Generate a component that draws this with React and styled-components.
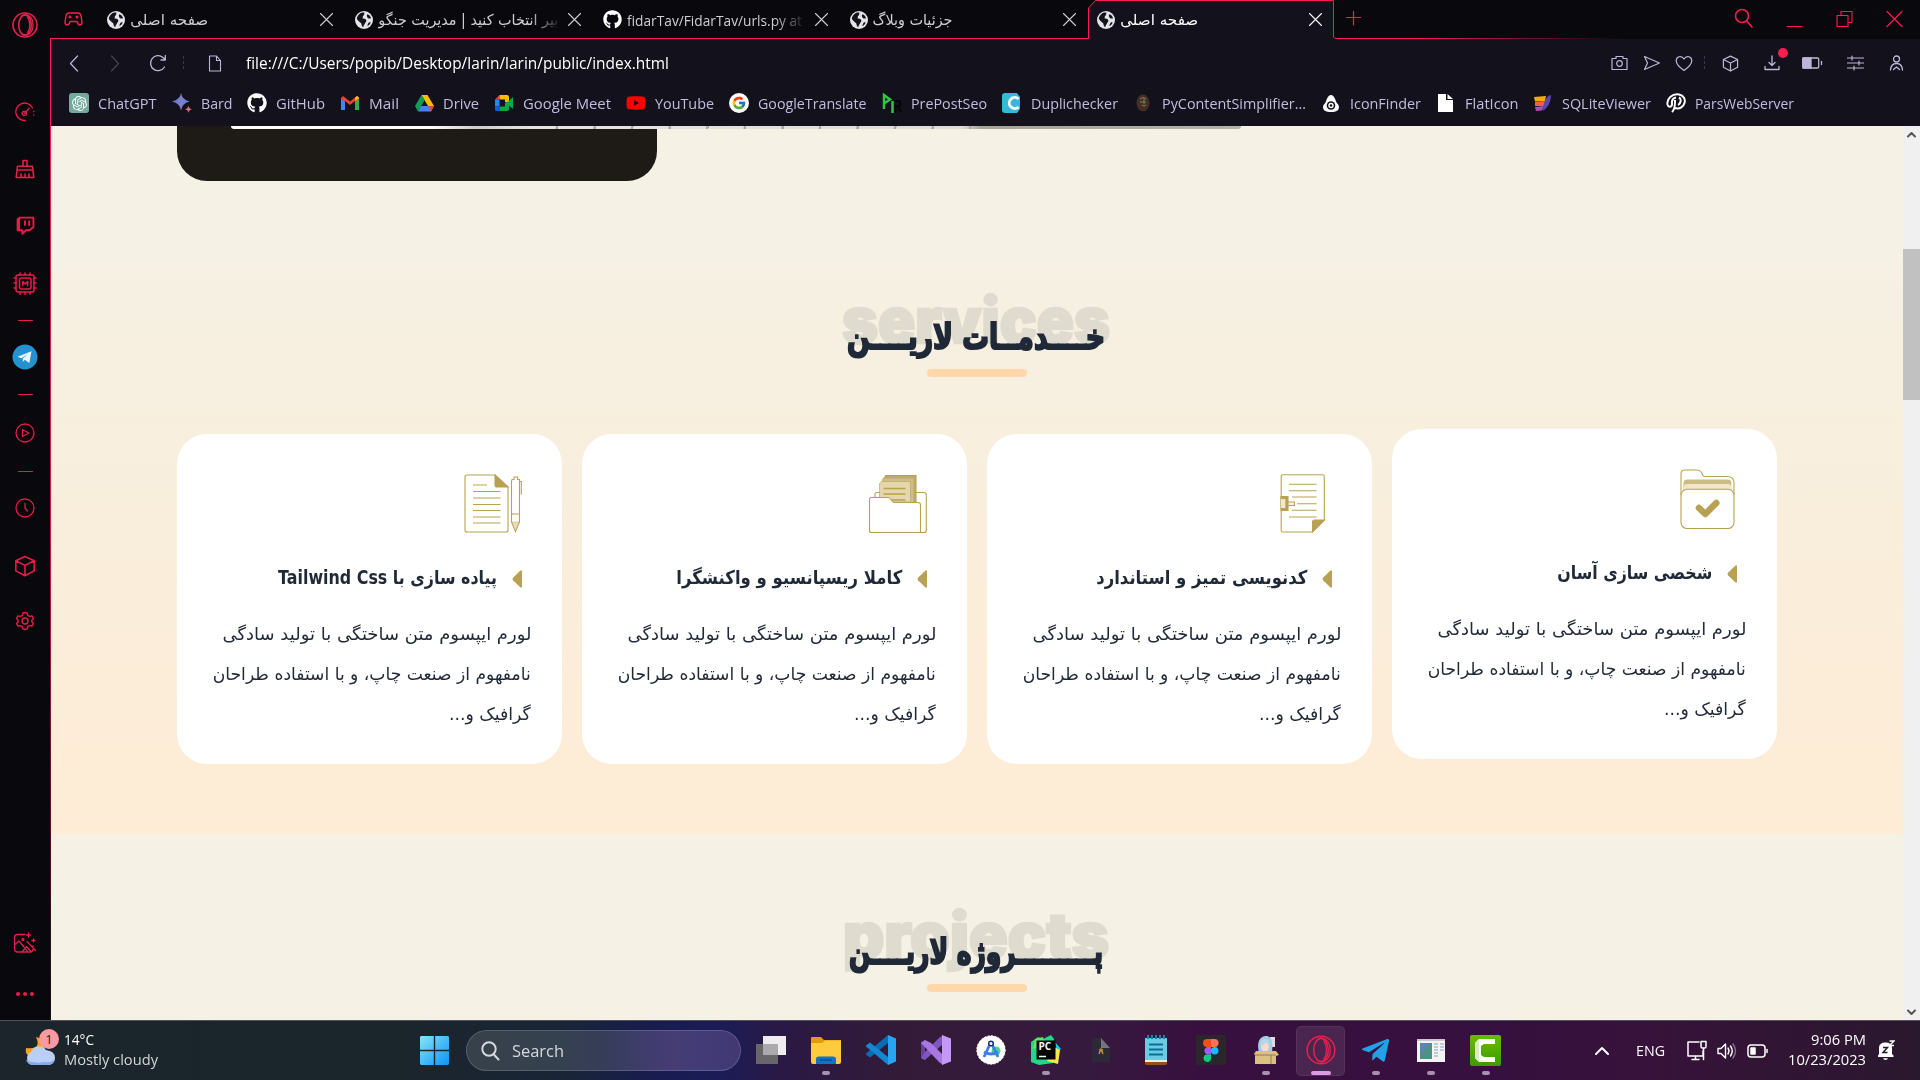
import React, { useLayoutEffect, useRef } from "react";
import styled, { createGlobalStyle } from "styled-components";
import { FaGithub, FaTelegramPlane, FaYoutube } from "react-icons/fa";
import { FcGoogle } from "react-icons/fc";
import { SiOpenai } from "react-icons/si";

const RED = "#fa1e4e";
const GOLD = "#b9a154";
const LATIN = '"Open Sans", "Noto Sans", sans-serif';
const PERSIAN = '"DejaVu Sans", "Noto Sans", sans-serif';

const Global = createGlobalStyle`
  * { box-sizing: border-box; }
  html, body { margin: 0; padding: 0; overflow: hidden; background: #09080d; }
  svg { display: block; flex: none; }
`;

/* ---------- fitted text ---------- */
const FitBox = styled.span`
  display: block;
  flex: none;
  width: ${(p) => p.$w}px;
  direction: ${(p) => (p.$rtl ? "rtl" : "ltr")};
  white-space: nowrap;
`;
const FitInner = styled.span`
  display: inline-block;
  transform-origin: ${(p) => (p.$rtl ? "right" : "left")} center;
`;
function Fit({ w, rtl, children }) {
  const ref = useRef(null);
  useLayoutEffect(() => {
    const el = ref.current;
    el.style.transform = "none";
    const natural = el.getBoundingClientRect().width;
    if (natural) el.style.transform = `scaleX(${w / natural})`;
  }, [w, children]);
  return (
    <FitBox $w={w} $rtl={rtl}>
      <FitInner ref={ref} $rtl={rtl}>{children}</FitInner>
    </FitBox>
  );
}

/* ---------- shell ---------- */
const Screen = styled.div`
  width: 1920px;
  height: 1080px;
  display: grid;
  grid-template-rows: 1020px 60px;
  font-family: ${LATIN};
`;
const Browser = styled.div`
  display: grid;
  grid-template-columns: 50px 1870px;
  background: #09080d;
`;
const Side = styled.aside`
  display: flex;
  flex-direction: column;
  align-items: center;
  padding-top: 1px;
  color: #e61c4a;
  background: #09080d;
`;
const SideItem = styled.div`
  height: 24px;
  width: 50px;
  margin-top: ${(p) => p.$gap}px;
  display: flex;
  align-items: center;
  justify-content: center;
`;
const Dash = styled.div`
  width: 15px;
  height: 1px;
  background: #e61c4a;
`;
const Column = styled.div`
  display: grid;
  grid-template-rows: 39px 87px 894px;
`;

/* ---------- tabs ---------- */
const TabBar = styled.div`
  display: flex;
  color: #cfced4;
  font: 400 15px ${LATIN};
`;
const TabUnderline = styled.div`
  display: flex;
  border-bottom: 1px solid ${RED};
  height: 39px;
`;
const TabLead = styled.div`
  width: 47px;
  padding: 11px 0 0 14px;
`;
const Tab = styled.div`
  position: relative;
  width: ${(p) => p.$w}px;
  height: 39px;
  padding: 0 12px 0 10px;
  display: flex;
  align-items: center;
  gap: 5px;
  font-family: ${(p) => (p.$fa ? PERSIAN : LATIN)};
  font-size: ${(p) => (p.$fa ? 15 : 15)}px;
  color: ${(p) => (p.$active ? "#fff" : "#cfced4")};
  & > svg:last-child { margin-left: auto; }
`;
const TabLabel = styled.div`
  ${(p) => p.$fade && "mask-image: linear-gradient(to right, #000 84%, rgba(0,0,0,.15) 100%);"}
`;
const ActiveOutline = styled.svg`
  position: absolute;
  left: 0;
  top: 0;
`;
const TabFront = styled.div`
  position: relative;
  display: flex;
  align-items: center;
  gap: 5px;
  margin-left: -1px;
`;
const TabClose = styled.div`
  position: relative;
  margin-left: auto;
`;
const TabRest = styled.div`
  flex: 1;
  display: flex;
  height: 39px;
  padding: 11px 17px 0 12px;
  color: ${RED};
  background: linear-gradient(to right, ${RED} 0 80px, rgba(250, 30, 78, 0) 290px) bottom / 100% 1px no-repeat;
`;
const WindowButtons = styled.div`
  margin-left: auto;
  display: flex;
  gap: 33px;
  margin-top: -3px;
`;

/* ---------- toolbar ---------- */
const Tools = styled.div`
  background: #13111b;
  border-left: 1px solid ${RED};
`;
const AddressRow = styled.div`
  height: 48px;
  display: flex;
  align-items: center;
  padding: 0 16px 0 18px;
  color: #bdb6d8;
`;
const Slot = styled.div`
  width: ${(p) => p.$w}px;
  display: flex;
  align-items: center;
  opacity: ${(p) => p.$o || 1};
`;
const Dots = styled.i`
  width: 1px;
  height: 14px;
  background: repeating-linear-gradient(#3b3752 0 3px, transparent 3px 5px);
`;
const Address = styled.div`
  font-size: 15.5px;
  color: #fff;
  margin-left: -1px;
`;
const ToolRight = styled.div`
  margin-left: auto;
  display: flex;
  align-items: center;
`;
const DownloadWrap = styled.div`
  position: relative;
`;
const RedDot = styled.i`
  position: absolute;
  right: -8px;
  top: -7px;
  width: 10px;
  height: 10px;
  border-radius: 50%;
  background: ${RED};
`;
const Bookmarks = styled.div`
  height: 32px;
  display: flex;
  align-items: center;
  padding-left: 18px;
  gap: 15px;
  color: #c3bcdf;
  font-size: 15px;
`;
const Bookmark = styled.div`
  display: flex;
  align-items: center;
  gap: 9px;
`;
const MarkIcon = styled.div`
  width: 20px;
  height: 20px;
  display: flex;
  align-items: center;
  justify-content: center;
  color: #fff;
`;
const GptTile = styled.div`
  width: 20px;
  height: 20px;
  border-radius: 3px;
  display: grid;
  place-items: center;
  background: #75a99c;
  color: #fff;
`;

/* ---------- page ---------- */
const Viewport = styled.div`
  display: grid;
  grid-template-columns: 1852px 17px;
  border-left: 1px solid;
  border-image: linear-gradient(#fa1e4e, #c01a42 50%, #400d24 85%, #1a0a16) 1;
  overflow: hidden;
`;
const Page = styled.main`
  height: 894px;
  overflow: hidden;
  background: #f5f1e4;
`;
const Hero = styled.section`
  position: relative;
  height: 120px;
  padding-left: 126px;
`;
const HeroPanel = styled.div`
  width: 480px;
  height: 55px;
  border-radius: 0 0 30px 30px;
  background: #1e1a16;
`;
const HeroPhoto = styled.div`
  position: absolute;
  left: 180px;
  top: 0;
  width: 1010px;
  height: 3px;
  border-radius: 0 0 6px 6px;
  background:
    repeating-linear-gradient(100deg, transparent 0 34px, #a9a8a6 35px 37px) 290px 0 / 450px 3px no-repeat,
    linear-gradient(to right, #fffdf8 0 200px, #cfcdc9 245px, #e6e4e0 300px, #e0ddd8 730px, #a8a29a 750px, #b9b1a5 100%);
`;
const Services = styled.section`
  height: 588px;
  padding: 33px 126px 0;
  background: linear-gradient(#f5f1e4, #f7efdf 25%, #feecd5);
`;
const Projects = styled.section`
  padding: 60px 126px 0;
`;
const Heading = styled.header`
  display: grid;
  grid-template-rows: 90px 8px;
  justify-items: center;
  margin-right: 2px;
`;
const Ghost = styled.div`
  grid-area: 1 / 1;
  margin-top: 1px;
  height: 80px;
  font: 900 63px/80px Inter, sans-serif;
  color: #dfdbce;
  -webkit-text-stroke: 2.5px #dfdbce;
`;
const Title = styled.h2`
  grid-area: 1 / 1;
  margin: 28px 0 0;
  height: 60px;
  font: 700 35px/60px ${PERSIAN};
  color: #1f2937;
  -webkit-text-stroke: 2.2px #1f2937;
`;
const Rule = styled.div`
  grid-area: 2 / 1;
  width: 100px;
  height: 8px;
  margin-left: 2px;
  border-radius: 4px;
  background: #fed7aa;
`;
const Cards = styled.div`
  display: flex;
  gap: 20px;
  margin-top: 57px;
`;
const Card = styled.article`
  width: 385px;
  height: 330px;
  padding: 40px 31px 0;
  border-radius: 30px;
  background: #fff;
  direction: rtl;
  color: #1f2937;
  margin-top: ${(p) => (p.$lifted ? -5 : 0)}px;
  & > svg { margin-right: 8px; }
`;
const CardTitle = styled.h3`
  height: 40px;
  margin: 23px 9px 17px 0;
  display: flex;
  align-items: center;
  gap: 15px;
  font: 700 19px/40px ${PERSIAN};
  & > svg { margin-top: 4px; }
`;
const CardText = styled.p`
  margin: 0;
  font: 400 17.5px/40px ${PERSIAN};
`;
const Scrollbar = styled.div`
  display: flex;
  flex-direction: column;
  align-items: center;
  background: #f0f0f0;
  padding: 5px 0 4px;
  color: #555;
`;
const Thumb = styled.div`
  width: 17px;
  height: 151px;
  margin: 111px 0 auto;
  background: #c1c1c1;
`;

/* ---------- taskbar ---------- */
const Taskbar = styled.footer`
  display: flex;
  align-items: center;
  border-top: 1px solid #54525f;
  padding: 0 25px 0 24px;
  color: #fff;
  background: linear-gradient(to right, #1b252b 0, #1a252c 400px, #192536 560px, #181c50 660px, #1b1c57 720px, #2a1945 780px, #331b38 900px, #361a3e 1080px, #38103f 1200px, #36103e 1500px, #37123a 1650px, #2a182e 1920px);
`;
const Weather = styled.div`
  position: relative;
  width: 396px;
  display: flex;
  gap: 8px;
  align-items: center;
`;
const WeatherBadge = styled.div`
  position: absolute;
  left: 15px;
  top: -3px;
  width: 20px;
  height: 20px;
  border-radius: 50%;
  background: #fb99a2;
  color: #2c1a20;
  font-size: 13px;
  line-height: 20px;
  text-align: center;
`;
const TwoLines = styled.div`
  font-size: 14.5px;
  line-height: 20px;
  margin-top: -2px;
  color: #d3d6d8;
  display: flex;
  flex-direction: column;
  align-items: ${(p) => (p.$end ? "flex-end" : "flex-start")};
  ${(p) => p.$end && "color: #fff;"}
  & > span:first-child { color: #fff; }
`;
const Search = styled.div`
  width: 275px;
  height: 41px;
  margin: 0 2px 0 17px;
  padding-left: 14px;
  display: flex;
  align-items: center;
  gap: 12px;
  border-radius: 21px;
  border: 1px solid rgba(255, 255, 255, 0.16);
  background: linear-gradient(to right, rgba(255, 255, 255, 0.13) 50%, rgba(150, 120, 180, 0.36) 74%, rgba(140, 120, 180, 0.32));
  color: #d5d8dc;
  font-size: 16px;
`;
const Apps = styled.div`
  display: flex;
  align-items: center;
`;
const AppButton = styled.div`
  width: 49px;
  height: 50px;
  margin: 0 3px;
  padding-top: 4px;
  border-radius: 5px;
  display: grid;
  grid-template-rows: 41px 4px;
  place-items: center;
  background: ${(p) => (p.$active ? "rgba(255,255,255,.09)" : "none")};
  box-shadow: ${(p) => (p.$active ? "inset 0 0 0 1px rgba(255,255,255,.07)" : "none")};
`;
const RunMark = styled.i`
  width: ${(p) => (p.$active ? 20 : 8)}px;
  height: 4px;
  border-radius: 2px;
  background: ${(p) => (p.$active ? "#dc9be4" : "#a78fae")};
`;
const Tray = styled.div`
  margin-left: auto;
  display: flex;
  align-items: center;
  font-size: 14.5px;
`;
const Bell = styled.div`
  margin-left: 11px;
`;

/* ---------- small drawings ---------- */
const Line = ({ w = 18, h = w, vb, sw = 1.3, children, fill = "none", ...r }) => (
  <svg width={w} height={h} viewBox={vb || `0 0 ${w} ${h}`} fill={fill} stroke="currentColor" strokeWidth={sw} strokeLinecap="round" strokeLinejoin="round" {...r}>{children}</svg>
);
const Cross = ({ s = 13, sw = 1.1 }) => <Line w={s} sw={sw}><path d={`M.5 .5 ${s - 0.5} ${s - 0.5}M${s - 0.5} .5 .5 ${s - 0.5}`} /></Line>;
const Globe = () => (
  <svg width="18" height="18" viewBox="0 0 18 18">
    <circle cx="9" cy="9" r="9" fill="#e4e5ea" />
    <path d="M4.500 3C6 1.600 8 1.400 9.500 1.800 8.800 3 9.800 3.800 8.300 4.700 7.200 5.400 8.600 6.300 7.200 7.300 8.800 7.600 10.300 7.600 11 8.700 12 10 10.800 10.800 10.200 12 9.600 13.500 8.500 14.200 8.200 16.300 6.700 15.500 6.600 13.500 6.200 12.200 4.500 10.800 2.600 9.500 1.800 7.500 2.200 5.500 3.200 4 4.500 3ZM12.300 3.200C14 3.500 15.500 5.200 16 7.200 14.500 7.700 12.700 7.300 12.200 5.900 11.800 5 11.700 4 12.300 3.200ZM14 11.300C15 11 15.500 11.300 15.600 11.800 14.900 13.500 13.800 14.600 12.500 15.200 12.300 13.900 13 12.400 14 11.300Z" fill="#14131b" />
  </svg>
);
const Opera = ({ w = 26, h = 26, sw = 1.6 }) => (
  <svg width={w} height={h} viewBox="0 0 26 26" fill="none" stroke="#e8204c" strokeWidth={sw}>
    <circle cx="13" cy="13" r="12" /><ellipse cx="13" cy="13" rx="6.300" ry="10" />
    <path d="M9.500 4C14 .5 21 4 21 13S14 25.500 9.500 22M15 5C18.500 8 18.500 18 15 21" strokeWidth={sw * 0.8} />
  </svg>
);
const Cube = ({ w = 18 }) => <Line w={w} vb="0 0 18 18"><path d="M9 1.200 16.500 4.700V13L9 17 1.500 13V4.700ZM1.500 4.700 9 8.500 16.500 4.700M9 8.500V17" /></Line>;

const sideItems = [
  [12, <Opera key="o" />],
  [63, <Line key="a" w={20} vb="0 0 19 19"><path d="M10 17.500A8.300 8.300 0 1 1 16.500 5.500M17.800 9V9.200M17.800 12.300V12.500M9 11 13.500 6" /><circle cx="8.800" cy="11" r="2" /></Line>],
  [33, <Line key="b" w={20} h={20} sw={1.600}><path d="M8 7V1.500H12V7M2.500 7.300H17.500L18.800 18.500H1.200ZM2 11H18M6 15V18M10 15V18M14 15V18" /></Line>],
  [32, <Line key="c" w={19} vb="0 0 18 18" sw={1.800}><path d="M3.500 1.500H16.500V10.500L13 13.500H9.500L6 17V13.500H1.500V3.500ZM8.500 5V8.500M12.500 5V8.500" /><path d="M2.600 3V13" strokeWidth="2.500" /></Line>],
  [34, <Line key="d" w={24} h={23} sw={1.500}><rect x="3" y="3" width="18" height="17" rx="2" /><rect x="6.500" y="6" width="11.500" height="11" rx="2" /><path d="M9.800 13.500V9.500L12.200 12 14.600 9.500V13.500M7 1V3M12 1V3M17 1V3M7 20V22.300M12 20V22.300M17 20V22.300M1 6H3M1 11H3M1 16H3M21 6H23M21 11H23M21 16H23" /></Line>],
  [13, <Dash key="e" />],
  [13, <svg key="f" width="26" height="26" viewBox="0 0 26 26"><circle cx="13" cy="13" r="12.500" fill="#2492cf" /><path d="M5.500 12.800 19.500 7.300 17.300 19 12.800 15.800 10.800 18V14.600L16 10 9.500 14.200Z" fill="#eef5fa" /></svg>],
  [13, <Dash key="g" />],
  [15, <Line key="h" w={20}><circle cx="10" cy="10" r="9" /><path d="M7.500 6.500V13.500L14 10Z" /></Line>],
  [14, <Dash key="i" />],
  [13, <Line key="j" w={20}><circle cx="10" cy="10" r="9" /><path d="M10 5.500V10L12.500 13" /></Line>],
  [34, <Cube key="k" w={22} />],
  [31, <Line key="l" w={20} vb="0 0 24 24" sw={1.700}><path d="M12 1.800 14.500 2.400 15.300 5.200 17.600 6.500 20.400 5.800 22.200 9 20.200 11V13L22.200 15 20.400 18.200 17.600 17.500 15.300 18.800 14.500 21.600 12 22.200 9.500 21.600 8.700 18.800 6.400 17.500 3.600 18.200 1.800 15 3.800 13V11L1.800 9 3.600 5.800 6.400 6.500 8.700 5.200 9.500 2.400Z" /><circle cx="12" cy="12" r="3.600" /></Line>],
  [298, <Line key="m" w={24} h={22} sw={1.300}><path d="M12 2.500H4A3 3 0 0 0 1.500 5.500V17A3 3 0 0 0 4.500 20H17A3 3 0 0 0 20 17V14M1.500 13 6 9 15 20M9 20 13.500 14.500 18 19.500M14 9.500 22.500 18.500M15.500 1V5M13.500 3H17.500M20.500 7V10M19 8.500H22" /><circle cx="10" cy="7.500" r="1" /></Line>],
  [27, <svg key="n" width="20" height="6" fill="#e61c4a"><circle cx="3" cy="3" r="2" /><circle cx="10" cy="3" r="2" /><circle cx="17" cy="3" r="2" /></svg>],
];

const bookmarks = [
  ["ChatGPT", 58.5, <GptTile key="a"><SiOpenai size={15} /></GptTile>],
  ["Bard", 31.5, <svg key="b" width="20" height="20"><defs><linearGradient id="bard" x1="0" x2="1"><stop stopColor="#3f7fe8" /><stop offset=".5" stopColor="#8b7bc8" /><stop offset="1" stopColor="#3f8fe0" /></linearGradient></defs><path d="M9 0Q9.800 6.500 17.500 8.500 9.800 10.500 9 17.500 8.200 10.500 0 8.500 8.200 6.500 9 0Z" fill="url(#bard)" /><path d="M16.500 12.500Q16.800 15.500 20 16.200 16.800 17 16.500 20 16.200 17 13 16.200 16.200 15.500 16.500 12.500Z" fill="#d9707e" /></svg>],
  ["GitHub", 49, <FaGithub key="c" size={20} />],
  ["Mail", 30, <svg key="d" width="18" height="14"><path d="M0 2V14H4V5L9 9 14 5V14H18V2L16 0 9 5.500 2 0Z" fill="#ea4335" /><path d="M0 3V14H4V6Z" fill="#4285f4" /><path d="M14 6V14H18V3Z" fill="#34a853" /><path d="M14 5 18 2.500V1.500L16 0 14 1.500Z" fill="#fbbc04" /></svg>],
  ["Drive", 36, <svg key="e" width="19" height="17"><path d="M6.500 0H12.500L19 11H13Z" fill="#fbbc04" /><path d="M6.500 0 9.500 5.200 3 16.500 0 11Z" fill="#0f9d58" /><path d="M3 16.500 6 11H19L16 16.500Z" fill="#4285f4" /><path d="M13 11H19L16 16.500Z" fill="#ea4335" /></svg>],
  ["Google Meet", 88, <svg key="f" width="19" height="16"><path d="M0 4.500 4.500 0V4.500Z" fill="#ea4335" /><path d="M4.500 0H12Q14 0 14 2V7H10V4.500H4.500Z" fill="#fbbc04" /><path d="M0 4.500H4.500V11.500H0Z" fill="#2684fc" /><path d="M0 11.500H4.500V16H1.500Q0 16 0 14.500Z" fill="#0066da" /><path d="M4.500 11.500H10V8L14 6 18 2V14L14 10.500V14Q14 16 12 16H4.500Z" fill="#00ac47" /></svg>],
  ["YouTube", 59, <FaYoutube key="g" size={20} color="#fe0000" />],
  ["GoogleTranslate", 108.5, <svg key="h" width="20" height="20"><circle cx="10" cy="10" r="10" fill="#fff" /><g transform="translate(2.500 2.500)"><FcGoogle size={15} /></g></svg>],
  ["PrePostSeo", 76, <svg key="i" width="20" height="20" fill="none" strokeWidth="2"><path d="M13 8H16Q18.500 8 18.500 10.500T16 13H13.500V19M16 13 19 19" stroke="#050505" /><path d="M2 16V2L8 6.500 2 10.500M10.500 8V20" stroke="#2fc642" strokeWidth="2.500" /></svg>],
  ["Duplichecker", 87, <svg key="j" width="20" height="20"><path d="M0 3Q0 0 3 0H15L18 4V16L15 20H3Q0 20 0 17Z" fill="#35b9d6" /><path d="M16.500 6A5.500 5.500 0 1 0 16.500 14" fill="none" stroke="#fff" strokeWidth="2.800" /></svg>],
  ["PyContentSimplifier...", 144, <svg key="k" width="18" height="18"><ellipse cx="9" cy="9" rx="6.500" ry="8.500" fill="#443022" /><path d="M6 5Q9 2 12 5M6 8H12M8 11Q10 13 12 11" stroke="#9b7550" fill="none" /><path d="M10 4V10" stroke="#368f9a" /></svg>],
  ["IconFinder", 71, <svg key="l" width="18" height="17"><path d="M9 0C12 0 13 4 14.500 7.500 17 10 18 13 15.500 15.500 12 17.500 6 17.500 2.500 15.500 0 13 1 10 3.500 7.500 5 4 6 0 9 0Z" fill="#fff" /><circle cx="9" cy="10.500" r="4.300" fill="#13111b" /><circle cx="9" cy="10.500" r="2.700" fill="#fff" /><circle cx="9" cy="10.500" r="1.300" fill="#13111b" /></svg>],
  ["FlatIcon", 53.5, <svg key="m" width="15" height="18" fill="#fff"><path d="M0 0H8V6H15V18H0ZM9.500 0 15 5H9.500Z" /></svg>],
  ["SQLiteViewer", 89, <svg key="n" width="18" height="17"><path d="M0 2 12 1 11 6 1 6.500Z" fill="#fba70e" /><path d="M1 7 11 6 10 11 1 11Z" fill="#f2603f" /><path d="M1 12 10 11 8 15.500 2 16Z" fill="#b648c4" /><path d="M17 0C11 1 9 9 9 16 13 13 17 8 17 0Z" fill="#5948a8" /></svg>],
  ["ParsWebServer", 99, <svg key="o" width="21" height="20" fill="none" stroke="#fff" strokeWidth="2"><path d="M6 19C9.500 16 9 11 9 7M9 15C19 18 23 3 13 1.500 6 .5 .5 6 1.500 11.500 2.500 15 6 14 6 11 5.500 7 7.500 5 10 4.500M13 4.500C16 6 14.500 11 12 12" /></svg>],
];

const Caret = () => <svg width="10" height="18" fill={GOLD}><path d="M10 1V17Q9.500 18 8.500 17.500L1 10.300Q0 9 1 7.700L8.500.500Q9.500 0 10 1Z" /></svg>;
const PaperPen = () => (
  <svg width="60" height="60" fill="none" stroke={GOLD} strokeWidth="1.100">
    <path d="M32 1H4Q2 1 2 3V56Q2 58 4 58H43Q45 58 45 56V13Z" /><path d="M32 1V11Q32 13 34 13H45Z" fill={GOLD} />
    <path d="M10 11H24M10 17.500H37.500M10 24H37.500M10 30.500H37.500M10 36.500H37.500M10 43H37.500M10 49H37.500" />
    <path d="M49 5.500H51V3H54.500V5.500H56.500V48L52.500 57.500 48.500 48V7ZM48.500 40H56.500M56.500 7.500H58.300V20.500" /><path d="M49 48H56L52.500 57Z" fill="#e9dfba" strokeWidth=".5" />
  </svg>
);
const FolderPapers = () => (
  <svg width="60" height="60" fill="none" stroke={GOLD} strokeWidth="1.100">
    <path d="M7 24V20.500Q7 18.500 9 18.500H56Q58.300 18.500 58.300 21V56.500Q58.300 58.500 56 58.500H51" />
    <path d="M18 1.500H48V28H16V4Z" fill="#c0aa68" /><path d="M14 4.500H45.500V28H14Z" fill="#cfbd84" stroke="none" /><path d="M13.500 7.500H42.500V28H11.500V9.500Z" fill="#e4d7ad" strokeWidth=".6" />
    <path d="M15.500 14.500H37.500M15.500 20H37.500M20 26H37.500" strokeWidth="1.300" />
    <path d="M1.500 25.500Q1.500 23.500 3.500 23.500H20Q21.500 23.500 22.500 25L24 27Q25 28.500 26.500 28.500H50Q52.500 28.500 52.500 31V58.500H3.500Q1.500 58.500 1.500 56.500Z" fill="#fff" /><path d="M52 58.500H56" />
  </svg>
);
const ClipPaper = () => (
  <svg width="60" height="60" fill="none" stroke={GOLD} strokeWidth="1.100">
    <path d="M10 .8H49.500Q51.300 .8 51.300 2.600V46L39.500 58H10Q8.200 58 8.200 56.200V2.600Q8.200 .8 10 .8Z" /><path d="M39.500 58V48Q39.500 46 41.500 46H51.300Z" fill={GOLD} />
    <path d="M16 10.300H43.500M16 16.800H43.500M19 23H43.500M24 29.800H43.500M19 36.300H43.500M16 43H43.500" />
    <path d="M8 22.500H15V36.500H8Z" fill={GOLD} /><path d="M8 25H12.300V34H8Z" fill="#f0e8cc" stroke="none" /><path d="M15 28H21.500V31.500H15Z" fill="#f8f2df" />
  </svg>
);
const FolderCheck = () => (
  <svg width="60" height="60" fill="none" stroke={GOLD} strokeWidth="1.100">
    <path d="M3 26V5Q3 1 7 1H19Q22 1 23.500 3.500L25 6.500Q25.500 7.500 27 7.500H50Q56 8 56 14V26" />
    <path d="M5.500 21V13.500Q6 10.500 9 10.500H50Q53 10.500 53.300 13.500V21Z" fill="#cdbb85" stroke="none" /><path d="M6 21V18Q6 15 9 15H50Q53 15 53 18V21Z" fill="#f0e7cd" stroke="none" />
    <rect x="3" y="20.300" width="53" height="39.200" rx="6" fill="#fff" /><path d="M21 39 27.300 45 38.300 34" strokeWidth="6.500" strokeLinecap="round" strokeLinejoin="round" />
  </svg>
);
const cards = [
  [<PaperPen key="i" />, "پیاده سازی با Tailwind Css", 219],
  [<FolderPapers key="i" />, "کاملا ریسپانسیو و واکنشگرا", 226],
  [<ClipPaper key="i" />, "کدنویسی تمیز و استاندارد", 211],
  [<FolderCheck key="i" />, "شخصی سازی آسان", 155, true],
];

const apps = [
  [<svg key="a" width="30" height="30"><path d="M7 1H30V20H7Z" fill="#eeecef" /><path d="M0 9H22V29H0Z" fill="#69666b" /><path d="M7 9H22V20H7Z" fill="#aba9ac" /></svg>],
  [<svg key="a" width="30" height="28"><path d="M0 2Q0 1 1 1H10L13 4H30V12H0Z" fill="#e39b07" /><path d="M0 7H11L14 4.500H30V26Q30 28 28 28H2Q0 28 0 26Z" fill="#fdcb3d" /><path d="M5 28V23Q5 20.500 8 20.500H22Q25 20.500 25 23V28Z" fill="#1272c4" /><path d="M9 24H21" stroke="#0c4c8a" strokeWidth="1.500" /></svg>, 1],
  [<svg key="a" width="30" height="30"><path d="M22 0 30 3.500V26.500L22 30Z" fill="#27a5f0" /><path d="M22 0V8L4 22.500 0 19.500V18.500Z" fill="#0a6cb4" /><path d="M22 30V22L4 7.500 0 10.500V11.500Z" fill="#1387d2" /></svg>],
  [<svg key="a" width="30" height="30"><path d="M0 7 4 5V25L0 23Z" fill="#6a3fa5" /><path d="M22 0V9L4 25 0 23 4 17 18 3Z" fill="#7e57bd" /><path d="M4 5 10 8 22 20V30L18 27 0 8Z" fill="#a678e0" /><path d="M21 0 30 3.500V26.500L21 30Z" fill="#c497f8" /></svg>],
  [<svg key="a" width="30" height="30"><circle cx="15" cy="15" r="14.200" fill="#fff" strokeDasharray="2 1.500" stroke="#fff" /><circle cx="20" cy="16" r="4.500" fill="#3ddc84" /><path d="M14.500 8 8 22M15.500 8 22 22M8 17Q15 21 22 17" stroke="#3f7df0" strokeWidth="2.800" fill="none" /><circle cx="15" cy="8.500" r="2.300" fill="#fff" stroke="#16345c" strokeWidth="1.500" /></svg>],
  [<svg key="a" width="30" height="30"><path d="M0 7 7 2 12 4 20 0 23 4 22 28 8 30 0 27Z" fill="#21d789" /><path d="M24 7 30 14 26 17Z" fill="#14c9ef" /><path d="M4 4 12 2 14 10 2 14Z" fill="#6fe05b" /><path d="M23 12 29 15 27 29 16 26Z" fill="#f4ec4c" /><rect x="5.500" y="5.500" width="19" height="19" fill="#050505" /><text x="7.500" y="15" fill="#fff" fontFamily="Open Sans, sans-serif" fontWeight="700" fontSize="10">PC</text><path d="M8 21.500H15" stroke="#fff" strokeWidth="1.500" /></svg>, 1],
  [<svg key="a" width="20" height="26"><path d="M1 1H10L19 11V25H1Z" fill="#2c2a36" /><path d="M10 1 19 11H10Z" fill="#77757f" /><path d="M8 17 10 12 12 17M8 12.500 12 15M12 12.500 8 15" stroke="#c79c24" strokeWidth="1.300" fill="none" /></svg>],
  [<svg key="a" width="24" height="30"><path d="M1 3H23V26H1Z" fill="#6bcbe5" /><path d="M1 26H23V28.500Q23 30 21 30H3Q1 30 1 28.500Z" fill="#92501f" /><path d="M1 25H23V27H1Z" fill="#e9edef" /><path d="M5 9.500H19M5 14.500H19M5 19.500H19" stroke="#087095" strokeWidth="2" /><path d="M4 0V4M8 0V4M12 0V4M16 0V4M20 0V4" stroke="#1183a8" strokeWidth="2" /></svg>],
  [<svg key="a" width="30" height="30"><rect width="30" height="30" rx="1" fill="#2a262b" /><path d="M11 4H15V12H11A4 4 0 0 1 11 4Z" fill="#f24e1e" /><path d="M15 4H18.500A4 4 0 0 1 18.500 12H15Z" fill="#ff7262" /><path d="M15 12H11A4 4 0 0 0 11 19.500H15Z" fill="#a259ff" /><circle cx="18.700" cy="15.700" r="3.800" fill="#1abcfe" /><path d="M15 19.500H11A3.700 3.700 0 1 0 15 23.500Z" fill="#0acf83" /></svg>],
  [<svg key="a" width="26" height="30"><path d="M17 2H22V12H17Z" fill="#dcdcdc" /><path d="M6 18C4 10 5 2 12 1S20 8 19 18Z" fill="#a3cbe0" /><ellipse cx="12" cy="12" rx="4" ry="4.500" fill="#f4dccb" /><path d="M7 11Q8 3 12 4 16 3 17 11L14 7 10 10Z" fill="#b5d7e8" /><path d="M1 19 3 16H23L26 20 23 21V29H2V20Z" fill="#d9c17f" /><path d="M2 20H23M18 20V29" stroke="#9a7f43" /></svg>, 1],
  [<Opera key="a" w={30} h={30} sw={1.300} />, 2],
  [<FaTelegramPlane key="a" size={31} color="#20a3e6" />, 1],
  [<svg key="a" width="28" height="23"><path d="M0 0H28V23H0Z" fill="#f3f3f3" /><path d="M3 4H15V20H3Z" fill="#4f9087" /><path d="M3 4H15Q8 10 3 16Z" fill="#5689ad" /><path d="M17 5H21M17 8H21M17 11H21M17 14H21M17 17H21M23 5H27M23 8H27M23 11H27" stroke="#8aa3b5" /><path d="M0 0H28V2H0Z" fill="#c9c9c9" /></svg>, 1],
  [<svg key="a" width="31" height="31"><defs><linearGradient id="cam" x2="0" y2="1"><stop stopColor="#6fba00" /><stop offset="1" stopColor="#3d9a00" /></linearGradient></defs><rect width="31" height="31" rx="2" fill="url(#cam)" /><path d="M5 8 9 4H25V9H14L11 11V20L14 22H25V27H9L5 23Z" fill="#fff" /><path d="M5 8 9 4V27L5 23Z" fill="#d8ebc8" /></svg>, 1],
];

export default function App() {
  return (
    <Screen>
      <Global />
      <Browser>
        <Side>{sideItems.map(([gap, icon], i) => <SideItem key={i} $gap={gap}>{icon}</SideItem>)}</Side>
        <Column>
          <TabBar>
            <TabUnderline>
              <TabLead><Line w={19} h={16} sw={1.400} color={RED}><path d="M5 2H14Q16.500 2 17 5L18 11Q18 14 15.500 14 14 14 13 10.500H6Q5 14 3.500 14 1 14 1 11L2 5Q2.500 2 5 2ZM5 6H7M6 5V7" /><circle cx="13" cy="6" r=".8" /></Line></TabLead>
              <Tab $w={248} $fa><Globe /><Fit w={78} rtl>صفحه اصلی</Fit><Cross /></Tab>
              <Tab $w={248} $fa><Globe /><TabLabel $fade><Fit w={180} rtl>بیر انتخاب کنید | مدیریت جنگو</Fit></TabLabel><Cross /></Tab>
              <Tab $w={247}><FaGithub size={19} color="#fff" /><TabLabel $fade><Fit w={175}>fidarTav/FidarTav/urls.py at</Fit></TabLabel><Cross /></Tab>
              <Tab $w={248} $fa><Globe /><Fit w={80} rtl>جزئیات وبلاگ</Fit><Cross /></Tab>
            </TabUnderline>
            <Tab $w={246} $fa $active>
              <ActiveOutline width="247" height="39"><path d="M.5 39V8L7.500 .5H245.500V37L247 38.500V39Z" fill="#13111b" stroke="none" /><path d="M.5 39V8L7.500 .5H245.500V37L247 38.500" fill="none" stroke={RED} /></ActiveOutline>
              <TabFront><Globe /><Fit w={78} rtl>صفحه اصلی</Fit></TabFront>
              <TabClose><Cross /></TabClose>
            </Tab>
            <TabRest>
              <Line w={15} sw={1.2}><path d="M0 6.500H15M7.500 0V14" /></Line>
              <WindowButtons>
                <Line w={19} h={20} sw={1.600}><circle cx="8" cy="8" r="6.500" /><path d="M12.500 13 18 19" /></Line>
                <Line w={17} h={20} sw={1.1}><path d="M1 18.500H16" /></Line>
                <Line w={17} h={20} sw={1.1}><path d="M1 7.500H12V18.500H1ZM5 7V3.500H16V14.500H12.500" /></Line>
                <Line w={17} h={20} sw={1.2}><path d="M1 3.500 16 18.500M16 3.500 1 18.500" /></Line>
              </WindowButtons>
            </TabRest>
          </TabBar>
          <Tools>
            <AddressRow>
              <Slot $w={41}><Line w={11} h={17} sw={1.2}><path d="M8.500 1 1.500 8.500 8.500 16" /></Line></Slot>
              <Slot $w={39} $o={0.3}><Line w={11} h={17} sw={1.2}><path d="M1.500 1 8.500 8.500 1.500 16" /></Line></Slot>
              <Slot $w={34}><Line w={18} h={18} sw={1.300}><path d="M15.500 13A7.500 7.500 0 1 1 14 3.500L16 5.500M16.300 1.500V6H12" /></Line></Slot>
              <Slot $w={25}><Dots /></Slot>
              <Slot $w={39}><Line w={14} h={17} sw={1.1}><path d="M1.500 1H8.500L12.500 5.500V16H1.500ZM8.500 1V5.500H12.500" /></Line></Slot>
              <Address><Fit w={423}>file:///C:/Users/popib/Desktop/larin/larin/public/index.html</Fit></Address>
              <ToolRight>
                <Slot $w={32}><Line w={17} h={16} sw={1.200}><path d="M1 3.500H5V1.500H12V3.500H16V14.500H1Z" /><circle cx="8.500" cy="8.500" r="2.800" /></Line></Slot>
                <Slot $w={32}><Line w={18} h={16} sw={1.200}><path d="M1.500 1.500 16.500 8 1.500 14.500 4.500 8Z" /></Line></Slot>
                <Slot $w={29}><Line w={18} h={17} sw={1.200}><path d="M9 15.500C4 12 1.200 9.500 1.200 5.800 1.200 1.500 6.500 0 9 4 11.500 0 16.800 1.500 16.800 5.800 16.800 9.500 14 12 9 15.500Z" /></Line></Slot>
                <Slot $w={18}><Dots /></Slot>
                <Slot $w={42}><Cube w={17} /></Slot>
                <Slot $w={38}><DownloadWrap><Line w={16} h={16}><path d="M1 11.500V14.500H15V11.500M8 1V10.500M5 7.500 8 10.500 11 7.500" /></Line><RedDot /></DownloadWrap></Slot>
                <Slot $w={45}><Line w={21} h={12}><rect x=".7" y="1" width="16" height="10" rx="1" /><path d="M1 1H9V11H1Z" fill="currentColor" /><path d="M19.500 4.500V7.500" /></Line></Slot>
                <Slot $w={42}><Line w={17} h={16} sw={1.200}><path d="M0 3H17M0 8H17M0 13H17M5 1V5M12 6V10M7 11V15" /></Line></Slot>
                <Slot $w={15}><Line w={15} h={16}><circle cx="7.500" cy="4" r="3" /><path d="M1.500 15Q2 8.500 7.500 8.500T13.500 15M4.500 14.500 7.500 12 10.500 14.500" /></Line></Slot>
              </ToolRight>
            </AddressRow>
            <Bookmarks>
              {bookmarks.map(([label, w, icon]) => <Bookmark key={label}><MarkIcon>{icon}</MarkIcon><Fit w={w}>{label}</Fit></Bookmark>)}
            </Bookmarks>
          </Tools>
          <Viewport>
            <Page>
              <Hero><HeroPanel /><HeroPhoto /></Hero>
              <Services>
                <Heading><Ghost><Fit w={268}>services</Fit></Ghost><Title><Fit w={258} rtl>خــــدمــات لاریــــن</Fit></Title><Rule /></Heading>
                <Cards>
                  {cards.map(([icon, title, w, lifted]) => (
                    <Card key={title} $lifted={lifted}>
                      {icon}
                      <CardTitle><Caret /><Fit w={w} rtl>{title}</Fit></CardTitle>
                      <CardText>
                        <Fit w={309} rtl>لورم ایپسوم متن ساختگی با تولید سادگی</Fit>
                        <Fit w={318} rtl>نامفهوم از صنعت چاپ، و با استفاده طراحان</Fit>
                        <Fit w={82} rtl>گرافیک و...</Fit>
                      </CardText>
                    </Card>
                  ))}
                </Cards>
              </Services>
              <Projects>
                <Heading><Ghost><Fit w={266}>projects</Fit></Ghost><Title><Fit w={254} rtl>پـــــــــروژه لاریــــن</Fit></Title><Rule /></Heading>
              </Projects>
            </Page>
            <Scrollbar>
              <Line w={9} h={7} sw={2}><path d="M1 5.500 4.500 2 8 5.500" /></Line>
              <Thumb />
              <Line w={9} h={7} sw={2}><path d="M1 1.500 4.500 5 8 1.500" /></Line>
            </Scrollbar>
          </Viewport>
        </Column>
      </Browser>
      <Taskbar>
        <Weather>
          <svg width="32" height="34"><path d="M12 3Q18 16 2 14 0 24 12 22 22 18 20 8 17 4 12 3Z" fill="#f5a31a" /><path d="M8 31A7 7 0 0 1 7 18 8.500 8.500 0 0 1 22 16Q31 17 31 24 30.500 31 24 31Z" fill="#b9cff5" /><path d="M2 26Q4 31 9 31H24Q30 30.500 31 25 27 29 21 28 10 30 2 26Z" fill="#86aae8" /></svg>
          <WeatherBadge>1</WeatherBadge>
          <TwoLines><Fit w={30}>14°C</Fit><Fit w={94}>Mostly cloudy</Fit></TwoLines>
        </Weather>
        <svg width="29" height="29"><defs><linearGradient id="win" x2="1" y2="1"><stop stopColor="#87e4fd" /><stop offset="1" stopColor="#0a94f6" /></linearGradient></defs><path d="M1 0H13.800V13.800H0V1ZM15.200 0H28L29 1V13.800H15.200ZM0 15.200H13.800V29H1L0 28ZM15.200 15.200H29V28L28 29H15.200Z" fill="url(#win)" /></svg>
        <Search><Line w={19} h={20} sw={2}><circle cx="8" cy="8" r="6.700" /><path d="M12.800 13.500 17.500 18.500" /></Line><Fit w={52}>Search</Fit></Search>
        <Apps>
          {apps.map(([icon, run], i) => <AppButton key={i} $active={run === 2}>{icon}{run && <RunMark $active={run === 2} />}</AppButton>)}
        </Apps>
        <Tray>
          <Slot $w={41}><Line w={14} h={9} sw={2}><path d="M1 8 7 2 13 8" /></Line></Slot>
          <Slot $w={51}><Fit w={29}>ENG</Fit></Slot>
          <Slot $w={30}><Line w={20} h={21} sw={1.500}><path d="M12 2H1V16H16V11M5 19.500H12M8.500 16V19M14 1.500H19V6.500Q19 8 17.500 8H15.500Q14 8 14 6.500ZM16.500 8V19.500" /></Line></Slot>
          <Slot $w={30}><Line w={20} h={18} sw={1.400}><path d="M1 6.500H4L8.500 2V16L4 11.500H1ZM11 6Q13 9 11 12M13.500 4Q17 9 13.500 14" /><path d="M16 2Q21 9 16 16" opacity=".4" /></Line></Slot>
          <Slot $w={41}><Line w={21} h={14} sw={1.500}><rect x="1" y="1" width="17" height="12" rx="3" /><path d="M4 4H8V10H4Z" fill="currentColor" /><path d="M20 5.500V8.500" /></Line></Slot>
          <TwoLines $end><Fit w={55}>9:06 PM</Fit><Fit w={78}>10/23/2023</Fit></TwoLines>
          <Bell><svg width="18" height="21"><path d="M1 15.500 2 14V8Q2 2.500 8.500 2.500T15 8V14L16.500 15.500V17H1ZM6 18.200H11Q10.500 20 8.500 20T6 18.200Z" fill="#fff" /><path d="M6 7.500H10.500L6 12.500H10.500" fill="none" stroke="#2a182e" strokeWidth="1.500" /><path d="M12.500 1H17L12.500 5.500H17" stroke="#fff" strokeWidth="1.400" fill="none" /></svg></Bell>
        </Tray>
      </Taskbar>
    </Screen>
  );
}
